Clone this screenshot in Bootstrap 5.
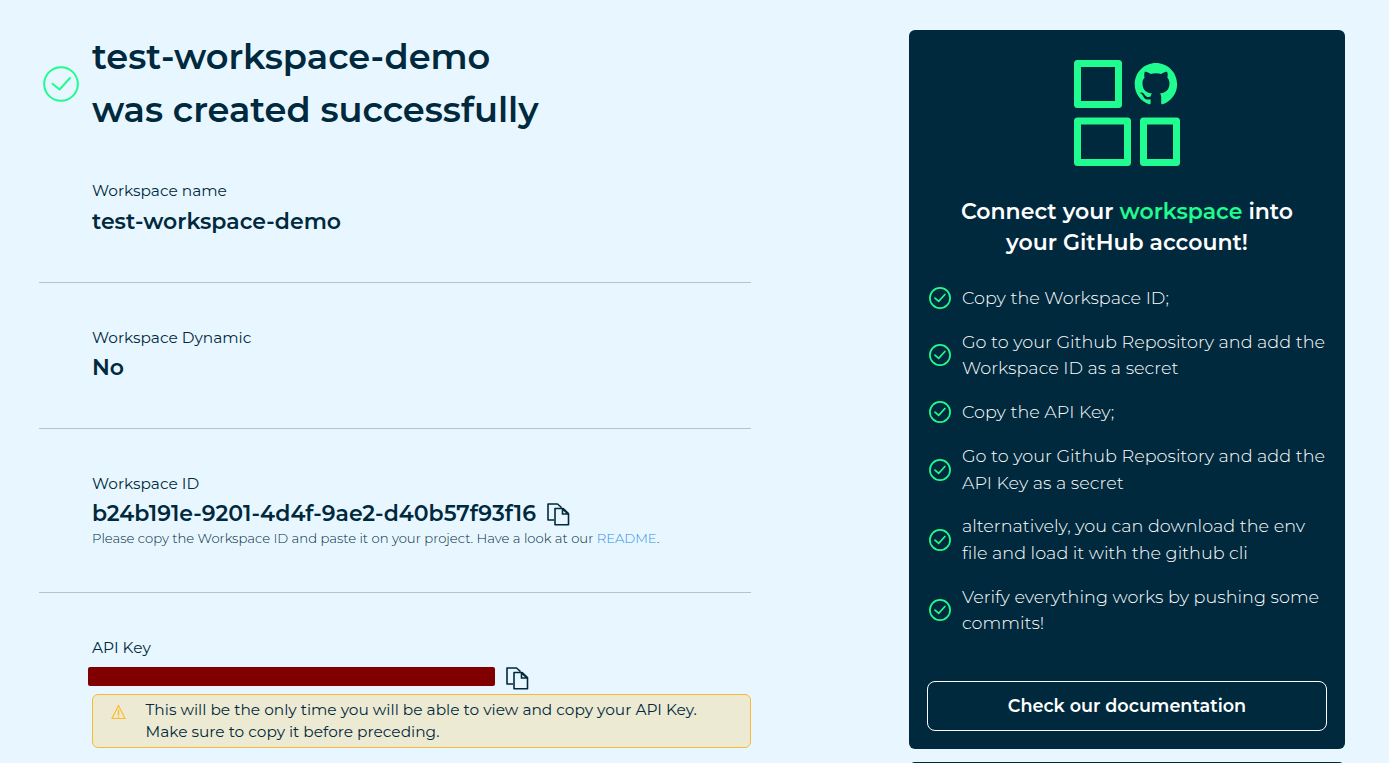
<!DOCTYPE html>
<html lang="en">
<head>
<meta charset="utf-8">
<meta name="viewport" content="width=device-width, initial-scale=1">
<title>Workspace created</title>
<link rel="stylesheet" href="https://cdn.jsdelivr.net/npm/bootstrap@5.3.0/dist/css/bootstrap.min.css">
<style>
:root{--navy:#00293d;--mint:#20fc8f}
body{background:#e8f7ff;color:var(--navy);font-family:Montserrat,Inter,"Open Sans",sans-serif}
svg{display:block;flex:none}
.page{padding:30px 44px 0 39px;height:100vh}
.main-col{width:712px}
.side-col{width:436px}
.title{height:107px;padding-left:3px;gap:12px}
.title h1{font-size:35.2px;line-height:52.8px;font-weight:600;white-space:nowrap}
.field{padding:43px 0 45px 53px;border-bottom:1px solid #b3c4cd}
.field.with-note{padding-bottom:44px}
.field-name{font-size:15.4px;line-height:23px;margin-bottom:4px}
.field.first{padding-top:42px}
.field.first .field-name{margin-bottom:5px}
.field-value{font-size:22px;line-height:30px;height:30px;font-weight:600;white-space:nowrap;gap:11px}
.hint{font-size:13.2px;line-height:20px;margin-top:-1px;font-weight:300;white-space:nowrap}
.hint a{color:#2f8fe8;text-decoration:none}
.redacted{width:407px;height:19px;margin:-3px 0 0 -4px;background:#800000;border-radius:2px}
.warn{height:54px;margin-top:1px;border:1px solid #fbb931;border-radius:6px;background:#edead3;padding:4px 18px;gap:19.5px;font-size:15.4px;line-height:22px;white-space:nowrap}
.warn svg{margin-top:5px}
.panel{background:var(--navy);border-radius:6px;color:#fff;padding:30px 18px 18px}
.panel h2{font-size:22px;line-height:31px;font-weight:600;margin:30px 0 27px}
.mint{color:var(--mint)}
.steps{gap:17.5px;padding-left:2px;font-size:17.6px;line-height:26.4px;font-weight:300;letter-spacing:.015px;white-space:nowrap}
.steps li{gap:11px}
.docs-btn{height:50px;margin-top:44.500px;border:1px solid #fff;border-radius:8px;color:#fff;font-size:17.6px;font-weight:600}
.next-panel{margin-top:13px;height:80px}
</style>
<script src="https://cdn.jsdelivr.net/npm/bootstrap@5.3.0/dist/js/bootstrap.bundle.min.js"></script>
</head>
<body>
<svg width="0" height="0" class="position-absolute" aria-hidden="true">
<symbol id="check" viewBox="0 0 22 22"><circle cx="11" cy="11" r="10.1"/><path d="M6 11.1l3.7 3.3 6.2-6.9"/></symbol>
<symbol id="copy" viewBox="0 0 23 24"><path d="M7 18H1V2h9.500l4 3.500M8 6.500h8.200l5.300 5v11.300H8z" stroke-linejoin="round"/><path d="M15.500 7v5h5.500M15.500 7l5.500 5"/></symbol>
</svg>
<div class="page d-flex justify-content-between align-items-start overflow-hidden">
<main class="main-col">
<div class="title d-flex align-items-center">
<svg width="38" height="38" viewBox="0 0 38 38" fill="none" stroke="#20fc8f" stroke-width="2" stroke-linecap="round" stroke-linejoin="round"><circle cx="19" cy="19" r="16.800"/><path d="M10.500 18.700l7 5.800L28 13"/></svg>
<h1 class="m-0">test-workspace-demo<br>was created successfully</h1>
</div>
<section class="field first"><div class="field-name">Workspace name</div><div class="field-value">test-workspace-demo</div></section>
<section class="field"><div class="field-name">Workspace Dynamic</div><div class="field-value">No</div></section>
<section class="field with-note"><div class="field-name">Workspace ID</div>
<div class="field-value d-flex align-items-center"><span>b24b191e-9201-4d4f-9ae2-d40b57f93f16</span><svg width="23" height="24" fill="none" stroke="#00293d" stroke-width="1.600"><use href="#copy"/></svg></div>
<div class="hint">Please copy the Workspace ID and paste it on your project. Have a look at our <a href="#">README</a>.</div></section>
<section class="field border-0 pb-0"><div class="field-name">API Key</div>
<div class="field-value d-flex align-items-center"><span class="redacted"></span><svg width="23" height="24" fill="none" stroke="#00293d" stroke-width="1.600"><use href="#copy"/></svg></div>
<div class="warn d-flex"><svg width="15" height="16" viewBox="0 0 15 16" fill="none" stroke="#fdbd32" stroke-width="1.200"><path d="M7.500 1.500L14 14.500H1z"/><path d="M7.500 5.500v6M7.500 12.500v1.200" stroke-width="1.500"/></svg><div>This will be the only time you will be able to view and copy your API Key.<br>Make sure to copy it before preceding.</div></div></section>
</main>
<aside class="side-col">
<div class="panel">
<svg class="mx-auto" width="106" height="106" viewBox="0 0 106 106" fill="none" stroke="#20fc8f" stroke-width="7" stroke-linejoin="round"><rect x="3.500" y="3.500" width="41" height="41"/><rect x="3.500" y="61" width="50" height="41.500"/><rect x="69.500" y="61" width="33" height="41.500"/>
<path transform="translate(60.700 3) scale(2.650)" fill="#20fc8f" stroke="none" d="M8 0C3.580 0 0 3.580 0 8c0 3.540 2.290 6.530 5.470 7.590.4.070.55-.17.55-.38 0-.19-.010-.82-.010-1.490-2.010.37-2.530-.49-2.690-.94-.09-.23-.48-.94-.82-1.130-.28-.15-.68-.52-.010-.53.63-.010 1.080.58 1.230.82.72 1.210 1.870.87 2.330.66.070-.52.28-.87.51-1.070-1.780-.2-3.640-.89-3.640-3.950 0-.87.31-1.590.82-2.150-.08-.2-.36-1.020.08-2.120 0 0 .67-.21 2.200.82.64-.18 1.320-.27 2-.27s1.360.09 2 .27c1.530-1.040 2.200-.82 2.200-.82.44 1.100.16 1.920.08 2.120.51.56.82 1.270.82 2.150 0 3.070-1.870 3.750-3.650 3.950.29.25.54.73.54 1.480 0 1.070-.010 1.930-.010 2.200 0 .21.15.46.55.38A8.010 8.010 0 0 0 16 8c0-4.420-3.580-8-8-8z"/></svg>
<h2 class="text-center text-nowrap">Connect your <span class="mint">workspace</span> into<br>your GitHub account!</h2>
<ul class="steps list-unstyled d-flex flex-column mb-0">
<li class="d-flex align-items-center"><svg width="22" height="22" fill="none" stroke="#20fc8f" stroke-width="1.700" stroke-linecap="round"><use href="#check"/></svg><div>Copy the Workspace ID;</div></li>
<li class="d-flex align-items-center"><svg width="22" height="22" fill="none" stroke="#20fc8f" stroke-width="1.700" stroke-linecap="round"><use href="#check"/></svg><div>Go to your Github Repository and add the<br>Workspace ID as a secret</div></li>
<li class="d-flex align-items-center"><svg width="22" height="22" fill="none" stroke="#20fc8f" stroke-width="1.700" stroke-linecap="round"><use href="#check"/></svg><div>Copy the API Key;</div></li>
<li class="d-flex align-items-center"><svg width="22" height="22" fill="none" stroke="#20fc8f" stroke-width="1.700" stroke-linecap="round"><use href="#check"/></svg><div>Go to your Github Repository and add the<br>API Key as a secret</div></li>
<li class="d-flex align-items-center"><svg width="22" height="22" fill="none" stroke="#20fc8f" stroke-width="1.700" stroke-linecap="round"><use href="#check"/></svg><div>alternatively, you can download the env<br>file and load it with the github cli</div></li>
<li class="d-flex align-items-center"><svg width="22" height="22" fill="none" stroke="#20fc8f" stroke-width="1.700" stroke-linecap="round"><use href="#check"/></svg><div>Verify everything works by pushing some<br>commits!</div></li>
</ul>
<a href="#" class="docs-btn btn d-flex align-items-center justify-content-center">Check our documentation</a>
</div>
<div class="panel next-panel"></div>
</aside>
</div>
</body>
</html>
